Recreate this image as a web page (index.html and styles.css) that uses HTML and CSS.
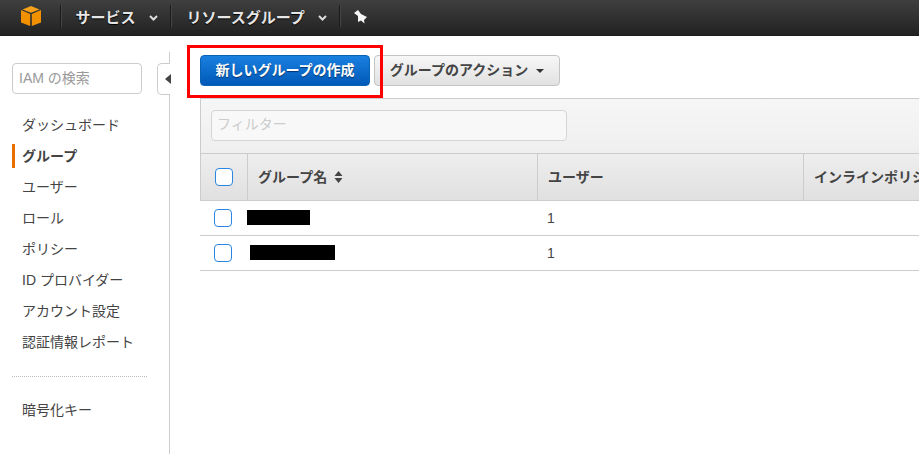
FILE: index.html
```html
<!DOCTYPE html>
<html lang="ja">
<head>
<meta charset="utf-8">
<title>IAM グループ</title>
<link rel="stylesheet" href="styles.css">
</head>
<body>
<header class="topbar">
  <svg class="logo" width="20" height="20" viewBox="0 0 20 20">
    <path d="M0 4 L9.2 8 V20 L0 16.5 Z" fill="#f29100"/>
    <path d="M20 4 L10.8 8 V20 L20 16.5 Z" fill="#f29100"/>
    <path d="M10 0 L18.5 3.4 L10 6.8 L1.5 3.4 Z" fill="#f7a01a"/>
  </svg>
  <span class="sep"></span>
  <span class="menu menu-services">サービス</span>
  <svg class="chev" width="9" height="6" viewBox="0 0 9 6"><path d="M1 1 L4.5 4.5 L8 1" fill="none" stroke="#ddd" stroke-width="2"/></svg>
  <span class="sep"></span>
  <span class="menu menu-groups">リソースグループ</span>
  <svg class="chev" width="9" height="6" viewBox="0 0 9 6"><path d="M1 1 L4.5 4.5 L8 1" fill="none" stroke="#ddd" stroke-width="2"/></svg>
  <span class="sep"></span>
  <svg class="pin" width="14" height="14" viewBox="0 0 14 14"><path d="M0 3 L4 0 L7 4 L13 7 L10 10 L10.5 13.5 L7 10.5 L4 12 L4 6 Z" fill="#f6f6f6"/></svg>
</header>
<div class="page">
  <aside class="sidebar">
    <div class="search">IAM の検索</div>
    <button class="collapse" aria-label="collapse"><span class="collapse-arrow"></span></button>
    <nav class="nav">
      <a>ダッシュボード</a>
      <a class="active">グループ</a>
      <a>ユーザー</a>
      <a>ロール</a>
      <a>ポリシー</a>
      <a>ID プロバイダー</a>
      <a>アカウント設定</a>
      <a>認証情報レポート</a>
    </nav>
    <hr class="divider">
    <nav class="nav nav-extra">
      <a>暗号化キー</a>
    </nav>
  </aside>
  <main class="content">
    <div class="toolbar">
      <button class="btn btn-primary">新しいグループの作成</button>
      <button class="btn btn-default">グループのアクション<span class="caret"></span></button>
      <span class="highlight"></span>
    </div>
    <section class="panel">
      <div class="filterbar"><div class="filter">フィルター</div></div>
      <div class="row head">
        <div class="cell c-check"><span class="check"></span></div>
        <div class="cell c-name">グループ名
          <svg class="sort" width="9" height="12" viewBox="0 0 9 12"><path d="M4.5 0 L8.5 5 H0.5 Z M4.5 12 L8.5 7 H0.5 Z" fill="#444"/></svg>
        </div>
        <div class="cell c-user">ユーザー</div>
        <div class="cell c-policy">インラインポリシー</div>
      </div>
      <div class="row body">
        <div class="cell c-check"><span class="check"></span></div>
        <div class="cell c-name"><span class="redact redact-1"></span></div>
        <div class="cell c-user">1</div>
      </div>
      <div class="row body">
        <div class="cell c-check"><span class="check"></span></div>
        <div class="cell c-name"><span class="redact redact-2"></span></div>
        <div class="cell c-user">1</div>
      </div>
    </section>
  </main>
</div>
</body>
</html>
```
FILE: styles.css
```css
* { box-sizing: border-box; }
html, body { margin: 0; height: 100%; overflow: hidden; }
body {
  background: #fff;
  color: #444;
  font: 14px/20px "Liberation Sans", "Noto Sans CJK JP", sans-serif;
}
.topbar {
  height: 36px;
  display: flex;
  align-items: center;
  padding: 0 0 3px 20.5px;
  background: linear-gradient(#3f3f3f, #222);
  border-bottom: 1px solid #1c1c1c;
  overflow: hidden;
}
.logo { flex: none; margin-right: 19px; }
.sep {
  width: 2px;
  height: 22px;
  border-left: 1px solid #1a1a1a;
  border-right: 1px solid #454545;
  flex: none;
}
.menu {
  color: #e6e6e6;
  font-weight: 700;
  font-size: 15px;
  text-shadow: 0 1px 1px #000;
  white-space: nowrap;
}
.menu-services { margin: 3px 0 0 14px; }
.menu-groups { margin: 3px 0 0 15px; }
.chev { flex: none; margin: 4px 12px 0 13px; }
.pin { flex: none; margin: 1px 0 0 13px; }

.page { display: flex; height: 418px; }
.sidebar {
  position: relative;
  width: 170px;
  flex: none;
  padding: 27px 0 0 12px;
}
.sidebar::after {
  content: "";
  position: absolute;
  right: 0;
  top: 16px;
  bottom: 0;
  width: 1px;
  background: #ccc;
}
.search {
  width: 130px;
  height: 31px;
  border: 1px solid #ccc;
  border-radius: 4px;
  padding: 4px 6px;
  color: #999;
}
.collapse {
  position: absolute;
  left: 157px;
  top: 27px;
  width: 13px;
  height: 32px;
  padding: 0;
  background: #fff;
  border: 1px solid #ccc;
  border-right: 0;
  border-radius: 5px 0 0 5px;
  z-index: 1;
}
.collapse-arrow {
  position: absolute;
  left: 7px;
  top: 10px;
  border: 5px solid transparent;
  border-left-width: 0;
  border-right: 6px solid #444;
}
.nav { display: flex; flex-direction: column; margin-top: 16px; }
.nav a {
  height: 31px;
  line-height: 31px;
  padding-left: 10px;
  color: #444;
  white-space: nowrap;
}
.nav a.active {
  font-weight: 700;
  border-left: 3px solid #e76f00;
  padding-left: 7px;
  height: 24px;
  line-height: 24px;
  margin: 3px 0 4px;
}
.divider {
  width: 135px;
  margin: 18px 0 0;
  border: 0;
  border-top: 1px dotted #bbb;
}
.nav-extra { margin-top: 18px; }

.content { flex: 1; min-width: 0; padding: 19px 0 0 30px; }
.toolbar { position: relative; display: flex; gap: 4px; height: 43px; }
.btn {
  height: 31px;
  border-radius: 4px;
  font: 700 14px/20px "Liberation Sans", "Noto Sans CJK JP", sans-serif;
  white-space: nowrap;
  padding: 0 0 2px;
}
.btn-primary {
  width: 170px;
  color: #fff;
  border: 1px solid #0a62b4;
  background: linear-gradient(#1a80e0, #0059b8);
  text-shadow: 0 1px 1px #00356f;
}
.btn-default {
  width: 186px;
  color: #444;
  border: 1px solid #c4c4c4;
  background: linear-gradient(#f7f7f7, #e1e1e1);
}
.caret {
  display: inline-block;
  margin-left: 8px;
  vertical-align: 2px;
  border: 4px solid transparent;
  border-top-color: #333;
  border-bottom: 0;
}
.highlight {
  position: absolute;
  left: -13px;
  top: -10px;
  width: 196px;
  height: 53px;
  border: 3px solid #f00;
  pointer-events: none;
}
.filterbar {
  height: 55px;
  padding: 11px 10px 0;
  border-top: 1px solid #ccc;
  border-left: 1px solid #ccc;
  background: linear-gradient(#f6f6f6, #efefef);
}
.filter {
  width: 356px;
  height: 31px;
  padding: 3px 5px;
  background: #f8f8f8;
  border: 1px solid #d5d5d5;
  border-radius: 4px;
  color: #ccc;
}
.row { display: flex; }
.head {
  height: 48px;
  border-top: 1px solid #ccc;
  border-bottom: 1px solid #ccc;
  border-left: 1px solid #ccc;
  background: linear-gradient(#eee, #e0e0e0);
  font-weight: 700;
  color: #444;
}
.cell { display: flex; align-items: center; white-space: nowrap; }
.c-check { width: 47px; flex: none; padding-left: 14px; }
.head .c-check { width: 46px; }
.c-name { width: 290px; flex: none; padding-left: 10px; gap: 7px; }
.c-user { width: 266px; flex: none; padding-left: 10px; }
.c-policy { flex: 1; padding-left: 10px; overflow: hidden; }
.head .cell + .cell { border-left: 1px solid #ccc; }
.check {
  width: 18px;
  height: 18px;
  border: 1px solid #2a86e0;
  border-radius: 4px;
  background: #fff;
}
.body { height: 35px; border-bottom: 1px solid #ccc; }
.body .c-name { padding-left: 0; }
.body .c-user { color: #444; }
.redact { display: block; height: 15px; background: #000; }
.redact-1 { width: 63px; margin-bottom: 2px; }
.redact-2 { width: 85px; margin: 0 0 2px 3px; }
```
